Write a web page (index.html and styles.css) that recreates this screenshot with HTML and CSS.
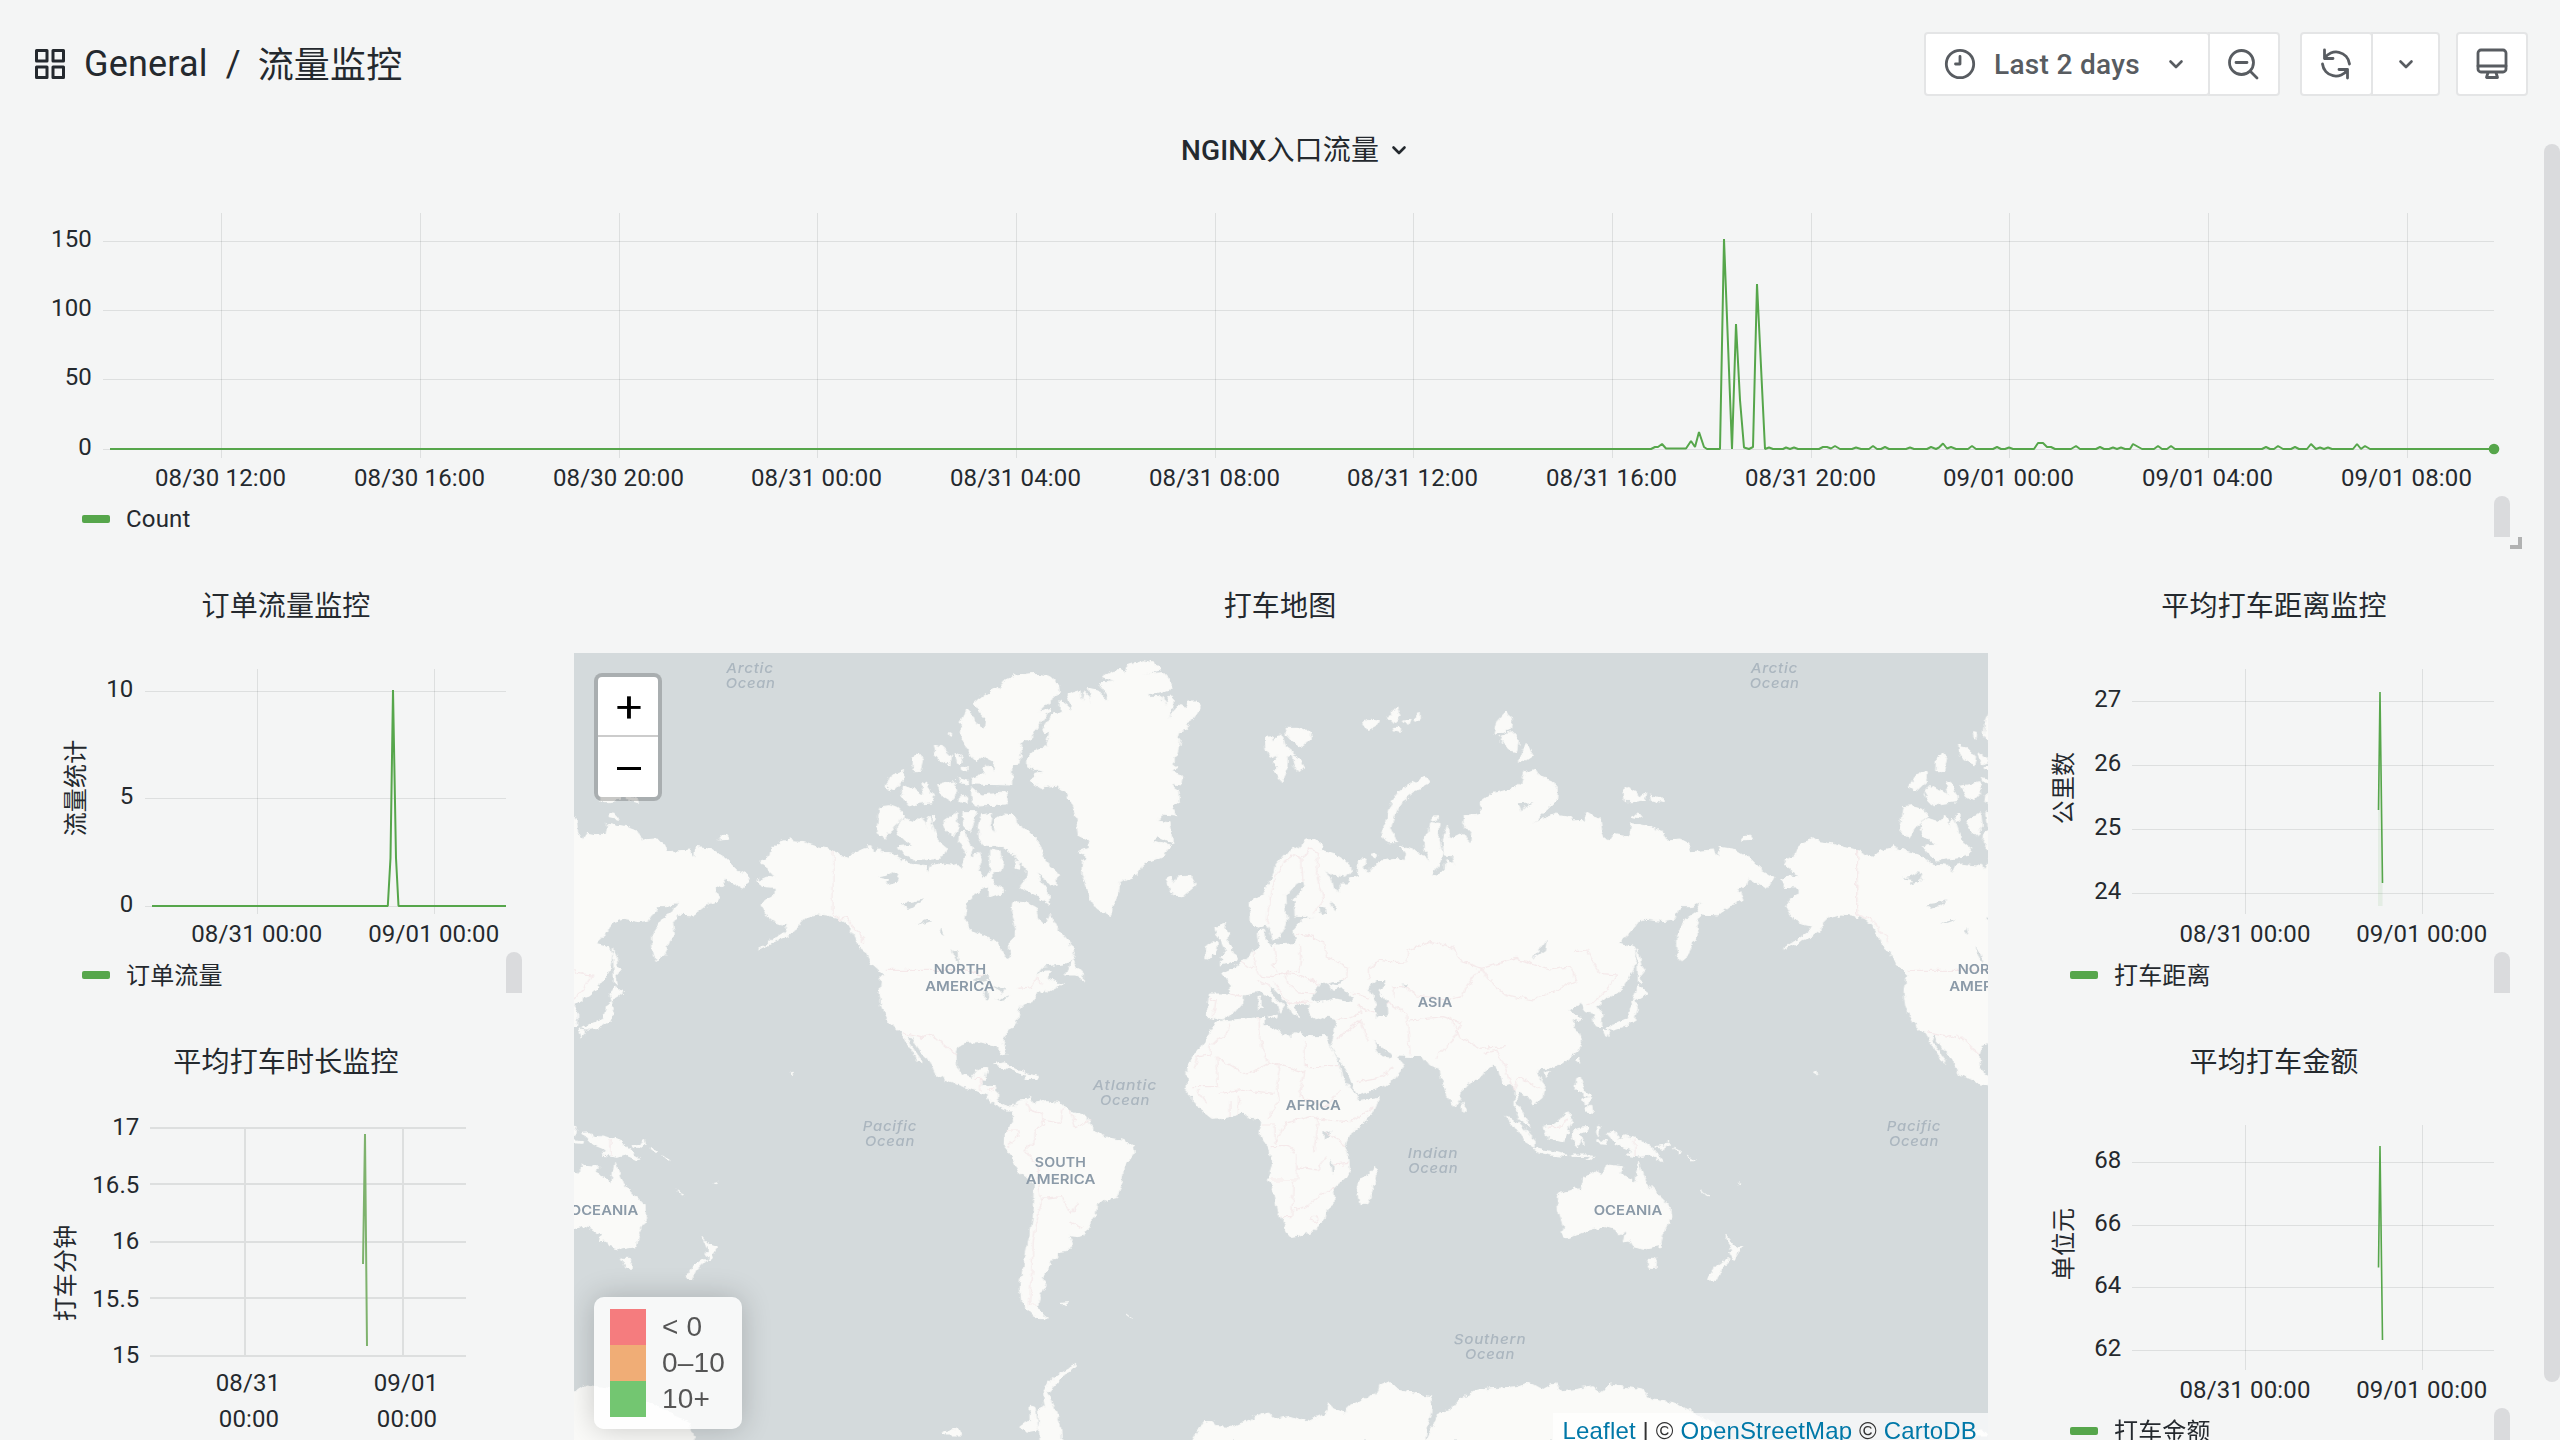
FILE: index.html
```html
<!DOCTYPE html>
<html lang="zh-CN">
<head>
<meta charset="utf-8">
<title>流量监控 - Grafana</title>
<link rel="stylesheet" href="styles.css">
</head>
<body>
<header class="topbar">
  <div class="crumbs">
    <svg class="apps" viewBox="0 0 30 30"><path d="M1.500 1.500h10.500v10.500h-10.500zM18 1.500h10.500v10.500h-10.500zM1.500 18h10.500v10.500h-10.500zM18 18h10.500v10.500h-10.500z"/></svg>
    <span class="folder">General</span><span class="slash">/</span><span class="name">流量监控</span>
  </div>
  <div class="tools">
    <div class="group">
      <button class="btn range">
        <svg class="ico" viewBox="0 0 32 32"><circle cx="16" cy="16" r="13.700"/><path d="M16 8.500v7.500h-4.500"/></svg>
        <span>Last 2 days</span>
        <svg class="chev" viewBox="0 0 16 16"><path d="M2.500 5.500l5.500 5.500 5.500-5.500"/></svg>
      </button>
      <button class="btn zoomout"><svg class="ico" viewBox="0 0 32 32"><circle cx="14.500" cy="14.500" r="12"/><path d="M9 14.500h11M23.500 23.500l6.500 6.500"/></svg></button>
    </div>
    <div class="group">
      <button class="btn sync"><svg class="ico" viewBox="0 0 32 32"><path d="M4.500 2v8.500h8.500M4.500 10.500A13.500 13.500 0 0 1 29.500 16M27.500 30v-8.500h-8.500M27.500 21.500A13.500 13.500 0 0 1 2.500 16"/></svg></button>
      <button class="btn more"><svg class="chev" viewBox="0 0 16 16"><path d="M2.500 5.500l5.500 5.500 5.500-5.500"/></svg></button>
    </div>
    <div class="group">
      <button class="btn tv"><svg class="ico" viewBox="0 0 32 32"><rect x="2" y="2" width="28" height="22" rx="3"/><path d="M2 18h28M12 24.500l-1.500 5h11l-1.500-5"/></svg></button>
    </div>
  </div>
</header>

<main class="dash">
  <section class="panel wide">
    <h2><span><b>NGINX</b>入口流量</span><svg class="chev dark" viewBox="0 0 16 16"><path d="M2.500 5.500l5.500 5.500 5.500-5.500"/></svg></h2>
    <svg class="chart" viewBox="32 186 2496 310">
      <path class="grid" d="M103 241.500H2494M103 310.500H2494M103 379.500H2494M103 449.500H2494M221.500 213V458M420.500 213V458M619.500 213V458M817.500 213V458M1016.500 213V458M1215.500 213V458M1413.500 213V458M1612.500 213V458M1811.500 213V458M2009.500 213V458M2208.500 213V458M2407.500 213V458"/>
      <g class="ylab"><text x="92" y="247">150</text><text x="92" y="316">100</text><text x="92" y="385">50</text><text x="92" y="455">0</text></g>
      <g class="xlab"><text x="220.500" y="486">08/30 12:00</text><text x="419.500" y="486">08/30 16:00</text><text x="618.500" y="486">08/30 20:00</text><text x="816.500" y="486">08/31 00:00</text><text x="1015.500" y="486">08/31 04:00</text><text x="1214.500" y="486">08/31 08:00</text><text x="1412.500" y="486">08/31 12:00</text><text x="1611.500" y="486">08/31 16:00</text><text x="1810.500" y="486">08/31 20:00</text><text x="2008.500" y="486">09/01 00:00</text><text x="2207.500" y="486">09/01 04:00</text><text x="2406.500" y="486">09/01 08:00</text></g>
      <path class="line" d="M110 449H1651L1655 447H1658L1662 444L1666 448.500H1686L1691 441L1695 447L1699 432L1704 447L1707 449H1720L1724 239L1732 449L1736 324L1740 400L1744 447.500L1749 449L1753 447L1757 284L1765 449L1769 447.500L1773 449H1783L1786 447.500L1790 449L1794 447.500L1798 449H1819L1823 447H1827L1831 448.500L1835 446L1840 449H1852L1856 447.500L1861 449H1869L1873 446L1877 449H1881L1885 447L1889 449H1906L1910 447.500L1914 449H1927L1931 447L1936 449L1939 447.500L1943 443.500L1947 448.500L1951 447L1956 449H1968L1972 446L1976 449H1993L1997 447L2001 449H2005L2009 447.500L2013 449H2034L2038 443H2043L2047 447H2051L2055 449H2071L2076 446L2080 449H2096L2100 447L2104 449H2109L2113 447.500L2117 449L2121 447.500L2125 449H2130L2133 444L2142 449H2154L2158 446L2162 449H2167L2171 446L2175 449H2262L2266 447L2270 449H2274L2278 446L2283 449H2291L2295 447L2299 449H2307L2311 444L2316 449L2320 447.500L2324 449L2328 447.500L2332 449H2353L2357 444L2361 449L2365 446L2370 449H2494"/>
      <circle class="dot" cx="2494" cy="449" r="5.300"/>
    </svg>
    <div class="legend latin"><i></i><span>Count</span></div>
    <em class="scroll"></em><em class="resize"></em>
  </section>

  <section class="panel orders">
    <h2><span>订单流量监控</span></h2>
    <svg class="chart" viewBox="32 642 508 310">
      <path class="grid" d="M145 691.500H506M145 798.500H506M145 906.500H506M257.500 669V914M434.500 669V914"/>
      <g class="ylab"><text x="133.500" y="697">10</text><text x="133.500" y="804">5</text><text x="133.500" y="912">0</text></g>
      <g class="xlab"><text x="256.800" y="942">08/31 00:00</text><text x="433.800" y="942">09/01 00:00</text></g>
      <text class="axis" transform="translate(84 788) rotate(-90)">流量统计</text>
      <path class="line" d="M152 906H387.800L390.500 858L393 690L396 858L398.500 906H506"/>
    </svg>
    <div class="legend"><i></i><span>订单流量</span></div>
    <em class="scroll"></em>
  </section>

  <section class="panel map-panel">
    <h2><span>打车地图</span></h2>
    <div class="map">
      <svg class="world" viewBox="12 39 4242 2364" preserveAspectRatio="xMidYMin slice">
        <defs>
          <filter id="coast" x="0" y="0" width="1" height="1" color-interpolation-filters="sRGB">
            <feTurbulence type="fractalNoise" baseFrequency=".045" numOctaves="3" seed="4"/>
            <feDisplacementMap in="SourceGraphic" scale="20" xChannelSelector="R" yChannelSelector="G"/>
          </filter>
          <g id="world">
            <g class="land">
              <!-- North America -->
              <path d="M560 722L590 708 615 712 600 695 580 680 572 660 598 650 605 625 625 608 645 602 655 592 675 605 700 608 720 615 750 622 780 628 810 642 835 655 850 640 875 628 892 625 900 612 908 632 925 627 940 635 965 640 990 655 1010 670 1040 677 1070 680 1075 697 1085 676 1100 672 1140 678 1162 672 1175 690 1190 640 1168 610 1172 575 1185 570 1195 600 1208 625 1200 650 1225 640 1235 665 1222 695 1245 715 1262 690 1262 630 1290 635 1297 665 1290 695 1270 700 1252 740 1215 765 1190 790 1182 835 1200 872 1240 885 1275 905 1292 925 1300 950 1315 960 1322 930 1320 905 1335 890 1338 870 1325 820 1328 785 1365 788 1395 800 1405 840 1420 855 1432 845 1440 820 1465 870 1500 912 1515 940 1512 955 1480 972 1420 978 1395 1010 1425 990 1440 990 1432 1015 1460 1030 1440 1045 1400 1060 1385 1085 1360 1095 1345 1110 1340 1150 1310 1180 1296 1200 1307 1245 1298 1250 1280 1220 1230 1205 1190 1207 1165 1217 1158 1245 1160 1280 1175 1305 1205 1315 1225 1288 1250 1285 1245 1310 1235 1320 1240 1338 1280 1340 1280 1380 1310 1400 1330 1395 1335 1410 1310 1410 1270 1390 1250 1365 1215 1350 1170 1335 1125 1318 1095 1300 1090 1285 1050 1230 1030 1200 1020 1185 1012 1188 1025 1220 1055 1262 1055 1270 1040 1258 1022 1228 995 1180 960 1150 935 1100 930 1060 935 1010 945 1005 905 970 890 940 870 925 855 890 830 850 800 832 770 825 740 822 710 830 690 850 680 870 640 895 600 912 565 930 600 905 640 880 655 855 625 850 600 840 575 800 590 775 615 765 615 745 575 742z"/>
              <path d="M1290 150L1305 120 1340 105 1395 100 1440 110 1465 135 1468 160 1430 190 1405 215 1440 205 1410 250 1385 290 1350 310 1355 335 1350 370 1325 375 1325 435 1210 432 1210 415 1245 400 1240 380 1255 375 1275 395 1275 365 1245 350 1220 365 1200 345 1185 310 1170 285 1175 240 1190 210 1210 225 1215 250 1245 265 1250 240 1210 190 1235 170 1270 145z"/>
              <path d="M920 575L930 500 955 497 985 505 1007 528 985 545 970 560 945 595zM985 550L1005 535 1035 545 1055 530 1070 560 1075 530 1090 560 1100 600 1130 625 1120 650 1080 655 1030 660 1000 640 985 620 1025 615 1005 600 985 585 978 565zM945 440L965 405 1000 392 1000 420 970 450zM990 455L1005 435 1040 455 1065 465 1055 425 1070 430 1090 465 1090 485 1045 490 1020 498 1005 480zM1093 316L1115 320 1145 350 1140 375 1110 360 1100 345zM1155 340L1175 350 1180 370 1165 375zM1030 355L1050 342 1058 355 1050 392 1028 392zM1100 435L1155 425 1160 460 1140 482 1120 470zM1205 440L1235 465 1310 458 1312 492 1215 495 1205 470zM1165 413L1195 420 1195 435 1170 430zM1175 465L1190 470 1188 490 1172 485zM1118 545L1160 515 1165 560 1150 588 1130 570zM1178 515L1220 515 1210 540 1200 575 1182 560zM1138 278L1148 280 1147 292 1140 290zM1085 530L1098 522 1098 540 1088 545zM1170 382L1195 382 1194 393 1172 390z"/>
              <path d="M1225 560L1235 525 1265 520 1258 560 1275 575 1272 540 1300 522 1335 525 1340 550 1370 570 1405 605 1418 650 1440 675 1465 700 1460 735 1440 740 1430 720 1400 700 1430 750 1440 795 1405 770 1375 755 1350 740 1365 720 1370 690 1330 640 1300 620 1240 615 1228 595zM1255 705L1280 735 1305 755 1275 765 1255 770zM1335 665L1350 668 1348 685 1335 682zM1485 1005L1505 960 1515 975 1540 1000 1540 1020 1515 1005zM1430 1010L1445 1030 1480 1030 1430 1057 1425 1045zM445 600L455 588 470 585 476 598zM1270 1275L1300 1268 1340 1285 1370 1300 1355 1303 1315 1285zM1368 1302L1405 1308 1400 1318 1370 1318z"/>
              <!-- South America -->
              <path d="M1330 1412L1345 1380 1370 1378 1385 1372 1390 1390 1430 1382 1470 1388 1500 1412 1540 1425 1565 1455 1565 1475 1610 1493 1655 1500 1690 1518 1693 1540 1660 1583 1656 1630 1640 1670 1610 1675 1580 1695 1575 1730 1540 1785 1525 1790 1495 1787 1508 1812 1490 1832 1460 1835 1460 1855 1438 1858 1440 1880 1418 1910 1428 1935 1410 1965 1402 2000 1420 2025 1435 2037 1400 2035 1375 2010 1355 1985 1350 1930 1365 1860 1380 1780 1390 1700 1393 1632 1345 1595 1325 1550 1300 1515 1302 1488 1330 1445z"/>
              <!-- Greenland, Iceland, Svalbard, British Isles, Arctic islands -->
              <g transform="translate(1410 0)">
                <path d="M310 62L345 70 362 90 310 102 370 98 385 115 398 135 385 152 330 165 330 172 365 172 380 200 385 170 400 168 398 200 385 238 415 195 440 205 445 183 470 183 483 203 460 235 435 250 443 268 415 272 410 285 420 300 412 340 400 350 400 375 415 385 395 395 425 405 420 435 395 430 415 460 415 490 395 500 408 525 375 523 350 540 390 545 398 612 350 590 340 605 392 620 370 650 310 668 290 705 240 725 235 760 218 790 212 830 170 805 150 775 140 740 125 700 128 660 145 650 115 635 148 625 145 600 115 585 110 540 100 500 82 460 50 438 0 445 -30 425 -10 412 -20 400 15 395 -10 390 -40 375 -40 355 -10 325 20 320 32 275 12 278 10 260 35 225 60 215 60 180 98 210 80 165 120 152 127 190 132 152 155 185 148 145 175 150 200 185 203 165 180 135 190 128 228 125 187 110 215 92 240 88 255 103 260 78z"/>
                <path d="M375 715L395 708 400 730 415 710 455 708 465 735 425 768 390 755zM675 292L698 290 700 310 725 280 735 315 765 340 742 350 740 390 725 425 702 390 720 380 700 370 715 345 690 355 678 330zM738 262L775 262 813 280 810 300 785 320 760 305 742 285zM757 345L780 360 792 380 775 398 762 375zM967 248L990 238 1018 240 1015 255 985 272zM1045 238L1070 200 1080 230 1065 248zM1090 240L1110 238 1105 258zM1120 235L1138 220 1138 240 1125 245zM1060 262L1082 262 1080 280 1062 276zM1370 245L1400 213 1415 240 1410 270 1362 280zM1380 290L1415 275 1435 300 1430 335 1405 330zM1435 370L1458 310 1480 345 1455 362zM1022 575L1040 545 1045 515 1060 480 1080 455 1110 435 1150 412 1168 415 1165 432 1120 455 1095 475 1075 505 1060 535 1052 565 1070 605 1040 605zM540 855L557 850 550 870 565 880 565 910 580 935 595 945 590 965 540 975 555 960 540 950 555 935 545 905 530 885 525 865zM500 920L515 905 532 910 528 945 497 958zM993 643L1005 636 1010 648 1000 654zM1178 532L1192 530 1192 540 1178 543zM657 1068L663 1068 663 1108 655 1108zM690 1128L712 1122 710 1135z"/>
                <!-- Eurasia -->
                <path d="M628 790L640 780 670 760 700 705 705 680 735 645 775 620 800 600 825 598 845 615 840 630 880 640 920 665 935 690 915 712 870 700 850 690 875 715 880 745 900 758 900 735 925 735 925 715 955 705 955 660 975 660 970 685 985 695 1020 665 1060 655 1095 658 1100 640 1080 618 1120 632 1150 648 1170 665 1152 620 1155 595 1165 580 1172 548 1200 550 1195 590 1207 640 1195 680 1170 705 1195 708 1215 690 1218 655 1245 678 1240 648 1212 645 1210 600 1222 555 1225 590 1240 595 1270 580 1290 615 1295 580 1268 550 1270 528 1325 520 1318 490 1360 460 1425 445 1445 430 1455 395 1480 385 1498 410 1535 422 1552 450 1550 480 1520 510 1480 548 1550 522 1595 530 1600 543 1635 540 1640 520 1680 535 1685 575 1700 603 1715 580 1770 588 1775 550 1830 560 1860 570 1880 600 1920 597 1945 610 1955 635 2020 630 2035 652 2040 622 2085 628 2130 655 2165 690 2203 712 2180 748 2125 715 2120 735 2095 745 2110 780 2080 790 2035 825 1980 822 1970 850 1975 885 1960 905 1945 945 1920 965 1910 920 1910 880 1940 835 1970 815 1985 785 1950 800 1925 800 1900 840 1870 845 1820 838 1795 845 1770 880 1738 910 1780 920 1788 940 1782 985 1750 1040 1720 1065 1705 1070 1670 1098 1685 1120 1685 1160 1665 1158 1658 1120 1635 1115 1625 1100 1620 1090 1588 1110 1600 1125 1625 1130 1600 1145 1610 1175 1620 1190 1625 1200 1615 1230 1570 1270 1520 1285 1495 1285 1490 1300 1515 1335 1510 1370 1480 1395 1460 1365 1435 1355 1430 1390 1450 1420 1470 1460 1440 1440 1425 1400 1425 1350 1410 1330 1390 1335 1380 1295 1365 1275 1335 1290 1330 1305 1270 1340 1260 1380 1245 1403 1225 1370 1205 1320 1200 1285 1170 1275 1150 1250 1070 1248 1040 1230 1000 1202 1015 1240 1040 1258 1060 1240 1092 1275 1070 1310 1030 1340 950 1363 925 1300 890 1250 872 1215 880 1195 888 1155 885 1138 850 1130 830 1140 805 1125 810 1095 780 1090 765 1095 765 1110 780 1130 755 1118 745 1095 710 1055 690 1035 695 1065 735 1100 722 1120 715 1098 665 1055 610 1065 610 1085 580 1120 545 1140 510 1130 500 1130 508 1062 570 1062 570 1030 545 1000 600 975 625 950 640 930 660 925 655 880 670 865 675 895 690 912 715 915 770 910 762 870 790 840 820 830 765 825 762 780 795 740 790 722 770 730 735 770 740 840 720 890 700 900 680 850 655 862 630 845z"/>
                <!-- Africa -->
                <path d="M440 1285L465 1245 500 1195 530 1145 600 1138 672 1132 672 1155 755 1195 765 1178 800 1190 865 1190 862 1205 885 1250 900 1280 905 1310 935 1350 955 1382 1018 1372 1005 1405 980 1440 930 1480 915 1520 925 1550 930 1600 880 1645 885 1685 860 1705 855 1740 810 1780 750 1790 738 1775 735 1755 712 1715 705 1660 682 1620 697 1575 690 1530 660 1485 665 1440 630 1435 620 1418 560 1432 515 1435 485 1412 470 1390 440 1358 442 1325zM1003 1578L1010 1605 985 1690 960 1695 953 1655 960 1615 985 1605zM1265 1388L1280 1410 1268 1420z"/>
              </g>
              <!-- East Asia and Oceania -->
              <g transform="translate(2790 0)">
                <path d="M412 925L420 950 423 975 435 992 420 1010 424 1035 415 1028zM415 1038L442 1058 425 1070 405 1080 400 1068zM405 1080L412 1105 402 1145 370 1160 340 1168 320 1165 350 1148 385 1135 395 1100zM310 1170L327 1172 318 1192zM372 450L385 442 410 455 420 470 440 460 435 480 400 485 375 485zM450 465L485 475 487 488 455 480zM398 530L412 517 426 535zM728 600L740 585 758 592zM230 1260L240 1250 238 1275zM132 1300L148 1298 138 1313zM230 1315L245 1312 245 1350 270 1365 262 1370 240 1355 228 1350zM255 1405L275 1395 280 1420 262 1418zM250 1375L272 1372 268 1392 255 1395zM133 1462L165 1455 200 1415 218 1430 208 1460 190 1505 145 1495zM15 1425L55 1450 105 1500 105 1522 75 1505 40 1455zM105 1525L180 1540 205 1550 150 1545 110 1535zM215 1475L235 1465 268 1462 262 1470 240 1478 252 1512 240 1500 232 1520 218 1500zM320 1480L345 1478 355 1500 375 1487 425 1500 465 1530 488 1562 450 1545 425 1552 375 1545 395 1530 350 1512zM465 1520L495 1515 505 1500 508 1512 490 1526zM215 1545H275V1549H215zM258 1560L285 1548 270 1562zM290 1455L300 1460 295 1490 290 1480zM290 1502L320 1505 318 1510 290 1508z"/>
                <path d="M172 1670L180 1660 240 1645 250 1615 285 1593 305 1603 320 1575 368 1580 360 1600 408 1625 417 1565 430 1600 445 1635 490 1680 510 1700 512 1735 490 1780 480 1820 430 1828 400 1820 388 1800 370 1803 378 1775 360 1785 345 1765 315 1757 260 1772 205 1793 183 1780 190 1760 175 1710zM437 1855L467 1855 465 1885 450 1885zM677 1788L700 1815 725 1822 702 1862 690 1840 698 1830zM685 1855L690 1860 665 1885 648 1922 625 1915 650 1880zM603 1650L628 1667 622 1668zM715 1627L725 1625 722 1632zM940 1300L948 1296 950 1305zM520 1522L545 1535 540 1538zM560 1545L585 1562 580 1565z"/>
              </g>
              <!-- Antarctica -->
              <path d="M1870 2403L1900 2350 1925 2345 1940 2360 1990 2362 2060 2330 2100 2322 2115 2338 2150 2330 2210 2345 2268 2320 2275 2290 2290 2305 2325 2320 2335 2300 2400 2268 2420 2265 2430 2235 2455 2225 2480 2250 2585 2270 2582 2320 2570 2360 2565 2403zM2570 2403L2605 2320 2640 2310 2665 2280 2720 2250 2840 2240 2870 2230 2920 2248 2955 2228 2975 2255 3070 2240 3090 2255 3120 2235 3220 2250 3245 2280 3310 2288 3360 2310 3390 2330 3430 2350 3445 2403zM1520 2172L1470 2200 1440 2225 1420 2255 1425 2300 1405 2310 1410 2403 1475 2403 1470 2350 1450 2300 1430 2260 1480 2210zM1380 2295L1395 2300 1405 2370 1375 2375 1350 2360 1380 2340zM1120 2375L1165 2370 1175 2385 1130 2385zM1475 1990L1498 1988 1485 1997zM1670 2022L1688 2035z"/>
            </g>
            <g class="water">
              <path d="M925 712L950 708 970 697 988 705 978 725 945 735 955 718zM998 790L1030 785 1060 778 1030 802 1010 810zM1035 855L1070 840 1085 840 1050 852zM1145 925L1162 940 1168 970 1155 955zM1210 1018L1240 1002 1265 1018 1240 1025zM1243 1060L1252 1048 1255 1078 1245 1078zM1270 1035L1305 1048 1295 1065zM1280 1080L1320 1065 1300 1082zM1330 700L1365 715 1330 745 1310 720zM1115 860L1125 885 1110 875z"/>
              <g transform="translate(1410 0)"><path d="M820 1078L825 1050 845 1022 868 1032 880 1050 905 1042 938 1075 930 1086 880 1078 830 1088zM870 1030L912 1018 895 1038zM985 1045L1010 1020 1035 1020 1035 1035 1015 1050 1040 1085 1042 1130 1012 1132 1002 1110 1010 1090zM838 800L858 803 860 820 842 825zM870 785L888 800 885 812zM1435 490L1480 487 1455 500 1445 518zM1520 897L1515 930 1475 957 1500 930zM853 1478L873 1470 870 1490 855 1500zM872 1560L880 1570 880 1600 874 1598zM1086 1030L1100 1035 1092 1045z"/></g>
            </g>
            <g class="border">
              <path d="M789 632V822L812 838 830 832 855 870 880 890 880 910M945 991H1180L1240 1003M1345 1045L1385 1040 1400 1012 1418 1035M1000 1178L1060 1192 1090 1185 1125 1215 1160 1245M1210 1315H1235V1350M1255 1355L1275 1345M1370 1382L1380 1410 1415 1422 1420 1455 1395 1470 1395 1500 1365 1530 1390 1560 1405 1580 1405 1630 1415 1675 1470 1670 1505 1720 1525 1690M1310 1470L1345 1470 1350 1485 1310 1520M1420 1440L1470 1450 1480 1405M1500 1410L1515 1460 1560 1440M1415 1675L1390 1800 1385 1900 1378 1995H1400M1500 1745L1540 1765"/>
              <g transform="translate(1410 0)">
                <path d="M682 850L688 770 710 700 735 665 765 645 785 660 788 722M765 645L790 655 810 625 835 640 830 690 850 780 820 820M765 880L820 890 850 905 860 950 900 970 922 985 920 1010 905 1018M705 920L710 965 695 975 720 1000 780 990 785 955 780 912M640 930L645 980 655 1005 700 1010 735 1000 770 1005 835 1030M605 970L640 985M570 1062L608 1070M510 1075L528 1080 520 1130M650 1020L690 1040M700 1025L745 1090 815 1085M735 1000L740 1030 770 1055 820 1060M938 1060L960 1065 985 1075M888 1138L930 1135 965 1120 955 1095M955 1095L1000 1120M985 1020L985 985 1020 960 1060 968 1100 965 1105 930 1175 905 1235 920 1265 965 1325 985 1380 970 1430 955 1470 970 1530 990 1590 980 1610 1020 1550 1050 1480 1080 1400 1065 1360 1035 1325 985M1062 1080V1040H1095L1130 1065 1220 1080 1265 1070 1280 1040 1325 985M1040 1085L1100 1120 1105 1180 1110 1240M1110 1140L1210 1130 1265 1150 1240 1200 1190 1250M1230 1130L1260 1190 1320 1225 1400 1220M1605 935L1640 930 1680 1000 1730 1005 1700 1050 1645 1100M530 1250L620 1305 685 1268 720 1275 795 1298M795 1200V1280H900M530 1250L535 1340 460 1340M570 1150L565 1170 510 1220V1245L475 1250 465 1285M655 1132L665 1220 685 1268M720 1275L710 1340 715 1390 680 1440M795 1290L780 1370 860 1400 900 1350M540 1360L620 1350 700 1360M665 1455H705V1510L735 1450 810 1430 860 1440 930 1445 1000 1400M692 1520H745L770 1540V1620H690M770 1580L830 1590 860 1550M760 1625L755 1730 725 1730M760 1710L800 1700 850 1660 885 1640M825 1540L835 1430M860 1480L915 1515M880 1575L925 1570M985 1202L960 1140 890 1200M950 1325L1030 1310 1060 1280M570 1385V1430M595 1370V1425M470 1350L500 1390M1335 1240L1370 1230 1400 1290 1420 1350 1440 1310 1500 1350"/>
                <ellipse cx="822" cy="1738" rx="11" ry="9"/>
                <path d="M1525 1465L1565 1460 1585 1435M1785 1497V1548"/>
              </g>
            </g>
          </g>
        </defs>
        <g filter="url(#coast)">
          <path class="sea" d="M-28 0H4294V2440H-28z"/>
          <use href="#world"/><use href="#world" x="-3072"/><use href="#world" x="3072"/>
        </g>
        <g class="ocean">
          <text x="540" y="100" textLength="142" lengthAdjust="spacingAndGlyphs">Arctic</text><text x="542" y="145" textLength="150" lengthAdjust="spacingAndGlyphs">Ocean</text>
          <text x="3613" y="100" textLength="142" lengthAdjust="spacingAndGlyphs">Arctic</text><text x="3614" y="145" textLength="150" lengthAdjust="spacingAndGlyphs">Ocean</text>
          <text x="960" y="1472" textLength="163" lengthAdjust="spacingAndGlyphs">Pacific</text><text x="960" y="1518" textLength="150" lengthAdjust="spacingAndGlyphs">Ocean</text>
          <text x="4032" y="1472" textLength="163" lengthAdjust="spacingAndGlyphs">Pacific</text><text x="4032" y="1518" textLength="150" lengthAdjust="spacingAndGlyphs">Ocean</text>
          <text x="1665" y="1349" textLength="193" lengthAdjust="spacingAndGlyphs">Atlantic</text><text x="1665" y="1394" textLength="150" lengthAdjust="spacingAndGlyphs">Ocean</text>
          <text x="2589" y="1553" textLength="152" lengthAdjust="spacingAndGlyphs">Indian</text><text x="2590" y="1598" textLength="150" lengthAdjust="spacingAndGlyphs">Ocean</text>
          <text x="2760" y="2111" textLength="218" lengthAdjust="spacingAndGlyphs">Southern</text><text x="2760" y="2156" textLength="150" lengthAdjust="spacingAndGlyphs">Ocean</text>
        </g>
        <g class="continent">
          <text x="1170" y="1001" textLength="158" lengthAdjust="spacingAndGlyphs">NORTH</text><text x="1170" y="1052" textLength="209" lengthAdjust="spacingAndGlyphs">AMERICA</text>
          <text x="4242" y="1001" textLength="158" lengthAdjust="spacingAndGlyphs">NORTH</text><text x="4242" y="1052" textLength="209" lengthAdjust="spacingAndGlyphs">AMERICA</text>
          <text x="1471" y="1581" textLength="153" lengthAdjust="spacingAndGlyphs">SOUTH</text><text x="1472" y="1632" textLength="209" lengthAdjust="spacingAndGlyphs">AMERICA</text>
          <text x="2595" y="1100" textLength="104" lengthAdjust="spacingAndGlyphs">ASIA</text><text x="2230" y="1409" textLength="165" lengthAdjust="spacingAndGlyphs">AFRICA</text>
          <text x="3174" y="1724" textLength="206" lengthAdjust="spacingAndGlyphs">OCEANIA</text><text x="102" y="1724" textLength="206" lengthAdjust="spacingAndGlyphs">OCEANIA</text>
        </g>
      </svg>
      <div class="zoom">
        <svg viewBox="0 0 60 60"><path d="M19 31.500h24" stroke-width="3"/><path d="M31 20v23" stroke-width="4"/></svg>
        <svg viewBox="0 0 60 60"><path d="M19 31.500h24" stroke-width="3"/></svg>
      </div>
      <div class="scale">
        <div><i class="low"></i>&lt; 0</div>
        <div><i class="mid"></i>0–10</div>
        <div><i class="high"></i>10+</div>
      </div>
      <div class="credit"><a>Leaflet</a> | © <a>OpenStreetMap</a> © <a>CartoDB</a></div>
    </div>
  </section>

  <section class="panel distance">
    <h2><span>平均打车距离监控</span></h2>
    <svg class="chart" viewBox="2020 642 508 310">
      <path class="grid" d="M2132 701.500H2494M2132 765.500H2494M2132 829.500H2494M2132 893.500H2494M2245.500 669V914M2422.500 669V914"/>
      <g class="ylab"><text x="2121.500" y="707">27</text><text x="2121.500" y="771">26</text><text x="2121.500" y="835">25</text><text x="2121.500" y="899">24</text></g>
      <g class="xlab"><text x="2245" y="942">08/31 00:00</text><text x="2421.800" y="942">09/01 00:00</text></g>
      <text class="axis" transform="translate(2072 788) rotate(-90)">公里数</text>
      <path class="area" d="M2378 810L2380 692L2382.500 883V906H2378z"/>
      <path class="line thin" d="M2378.500 810L2380 692L2382.500 883"/>
    </svg>
    <div class="legend"><i></i><span>打车距离</span></div>
    <em class="scroll"></em>
  </section>

  <section class="panel duration">
    <h2><span>平均打车时长监控</span></h2>
    <svg class="chart tall" viewBox="32 1098 508 342">
      <path class="grid bold" d="M150 1128H466M150 1184H466M150 1242H466M150 1298H466M150 1356H466M245 1127V1356M403 1127V1356"/>
      <g class="ylab"><text x="139.500" y="1135">17</text><text x="139.500" y="1193">16.5</text><text x="139.500" y="1249">16</text><text x="139.500" y="1307">15.5</text><text x="139.500" y="1363">15</text></g>
      <g class="xlab"><text x="248" y="1391">08/31</text><text x="249" y="1427">00:00</text><text x="406" y="1391">09/01</text><text x="407" y="1427">00:00</text></g>
      <text class="axis" transform="translate(74 1273) rotate(-90)">打车分钟</text>
      <path class="line olive" d="M363 1264L365 1134L367 1346"/>
    </svg>
  </section>

  <section class="panel amount">
    <h2><span>平均打车金额</span></h2>
    <svg class="chart" viewBox="2020 1098 508 310">
      <path class="grid" d="M2132 1162.500H2494M2132 1225.500H2494M2132 1287.500H2494M2132 1350.500H2494M2245.500 1125V1370M2422.500 1125V1370"/>
      <g class="ylab"><text x="2121.500" y="1168">68</text><text x="2121.500" y="1231">66</text><text x="2121.500" y="1293">64</text><text x="2121.500" y="1356">62</text></g>
      <g class="xlab"><text x="2245" y="1398">08/31 00:00</text><text x="2421.800" y="1398">09/01 00:00</text></g>
      <text class="axis" transform="translate(2072 1244) rotate(-90)">单位元</text>
      <path class="line thin" d="M2378.500 1267.500L2380 1146L2382.500 1340"/>
    </svg>
    <div class="legend"><i></i><span>打车金额</span></div>
    <em class="scroll"></em>
  </section>
</main>
<div class="page-scroll"></div>
</body>
</html>
```

FILE: styles.css
```css
* { box-sizing: border-box; }
html, body { height: 100%; }
body {
  margin: 0;
  width: 2560px;
  height: 1440px;
  overflow: hidden;
  position: relative;
  background: #f4f5f5;
  color: #24292e;
  font-family: Roboto, "Noto Sans CJK SC", sans-serif;
  letter-spacing: .01071em;
}
.topbar {
  height: 112px;
  padding: 0 32px 0 35px;
  display: flex;
  justify-content: space-between;
  align-items: flex-start;
}
.crumbs { display: flex; align-items: center; height: 128px; font-size: 36px; }
.apps { width: 30px; height: 30px; margin-right: 19px; fill: none; stroke: #24292e; stroke-width: 3; stroke-linejoin: round; }
.slash { margin: 0 17px 0 18px; }
.name { padding-bottom: 4px; }
.tools { display: flex; gap: 16px; padding-top: 32px; }
.group { display: flex; }
.group:first-child { margin-right: 4px; }
.btn {
  height: 64px;
  padding: 0;
  display: flex;
  align-items: center;
  justify-content: center;
  background: #fff;
  border: 2px solid #e4e5e6;
  border-radius: 4px;
  color: #585c61;
  font: 500 28px Roboto, sans-serif;
  letter-spacing: .01071em;
}
.btn + .btn { border-top-left-radius: 0; border-bottom-left-radius: 0; margin-left: -2px; }
.range { width: 286px; justify-content: flex-start; padding-left: 18px; }
.range span { margin: 0 28px 0 18px; }
.zoomout { width: 72px; }
.sync { width: 73px; }
.more { width: 69px; }
.tv { width: 72px; }
.ico { width: 32px; height: 32px; fill: none; stroke: #585c61; stroke-width: 2.800; stroke-linecap: round; stroke-linejoin: round; }
.zoomout .ico, .sync .ico { margin-right: 2px; }
.chev { width: 16px; height: 16px; fill: none; stroke: #585c61; stroke-width: 2.600; stroke-linecap: round; stroke-linejoin: round; }

.dash {
  display: grid;
  grid-template-columns: 508px 1448px 508px;
  grid-template-rows: 440px 440px 416px;
  grid-template-areas: "wide wide wide" "orders map distance" "duration map amount";
  gap: 16px;
  padding: 0 32px;
}
.panel { position: relative; display: flex; flex-direction: column; min-width: 0; }
.wide { grid-area: wide; }
.orders { grid-area: orders; }
.map-panel { grid-area: map; }
.distance { grid-area: distance; }
.duration { grid-area: duration; }
.amount { grid-area: amount; }
h2 {
  flex: none;
  height: 74px;
  margin: 0;
  display: flex;
  align-items: center;
  justify-content: center;
  font-size: 28px;
  font-weight: 400;
}
h2 span { padding-bottom: 2px; }
h2 b { font-weight: 500; }
.wide h2 { padding-left: 28px; gap: 12px; }
.dark { stroke: #24292e; margin-top: 2px; }
.chart { flex: none; display: block; width: 100%; height: 310px; }
.chart.tall { height: 342px; }
.chart text { font-size: 24px; fill: #24292e; letter-spacing: .14px; }
.ylab { text-anchor: end; }
.xlab, .axis { text-anchor: middle; }
.grid { stroke: rgba(36, 41, 46, .11); stroke-width: 1; fill: none; }
.bold { stroke-width: 2; }
.line { fill: none; stroke: #56a64b; stroke-width: 2; stroke-linejoin: bevel; }
.thin { stroke-width: 1.600; }
.olive { stroke: #7eb26d; }
.area { fill: rgba(86, 166, 75, .1); }
.dot { fill: #56a64b; }
.legend { flex: none; height: 46px; padding-left: 50px; display: flex; align-items: center; gap: 16px; font-size: 24px; }
.legend span { padding-bottom: 4px; }
.latin span { padding-bottom: 0; }
.legend i { width: 28px; height: 8px; border-radius: 2px; background: #56a64b; }
.scroll { position: absolute; right: 18px; top: 384px; width: 16px; height: 41px; border-radius: 8px 8px 0 0; background: #dadbdd; }
.resize { position: absolute; right: 6px; top: 425px; width: 12px; height: 12px; border-right: 4px solid #b1b2b2; border-bottom: 4px solid #b1b2b2; }

.map { position: relative; flex: 1; margin: 11px 16px 0 18px; overflow: hidden; background: #d4dadc; }
.world { display: block; width: 1414px; height: 788px; }
.sea { fill: #d4dadc; }
.land { fill: #fafaf8; stroke: #fafaf8; stroke-width: 3; stroke-linejoin: round; }
.water { fill: #d4dadc; }
.border { fill: none; stroke: #f5e9ea; stroke-width: 3.500; stroke-linejoin: round; }
.ocean { font: italic 500 41px Inter, sans-serif; letter-spacing: 2px; fill: #abb6bf; text-anchor: middle; }
.continent { font: 600 41px Inter, sans-serif; fill: #8b9aa8; text-anchor: middle; }
.zoom { position: absolute; left: 20px; top: 20px; width: 68px; border: 4px solid rgba(0, 0, 0, .2); border-radius: 8px; background: #fff; background-clip: padding-box; }
.zoom svg { display: block; width: 60px; height: 60px; stroke: #000; }
.zoom svg:first-child { border-bottom: 2px solid #ccc; }
.scale {
  position: absolute; left: 20px; top: 644px; width: 148px; height: 132px;
  padding: 12px 16px;
  border-radius: 10px;
  background: rgba(255, 255, 255, .8);
  box-shadow: 0 0 30px rgba(0, 0, 0, .2);
  color: #555;
  font: 28px/36px "Liberation Sans", sans-serif;
}
.scale div { display: flex; gap: 16px; white-space: pre; }
.scale i { width: 36px; height: 36px; }
.low { background: #f57c7e; }
.mid { background: #f0ad76; }
.high { background: #73c671; }
.credit {
  position: absolute; right: 0; top: 760px; height: 40px; padding: 0 11px 0 10px;
  background: rgba(255, 255, 255, .7);
  color: #333;
  font: 24px/36px "Liberation Sans", sans-serif;
  white-space: nowrap;
}
.credit a { color: #0078a8; }
.page-scroll { position: absolute; right: 0; top: 144px; width: 16px; height: 1238px; border-radius: 8px; background: #dadbdd; }
```
